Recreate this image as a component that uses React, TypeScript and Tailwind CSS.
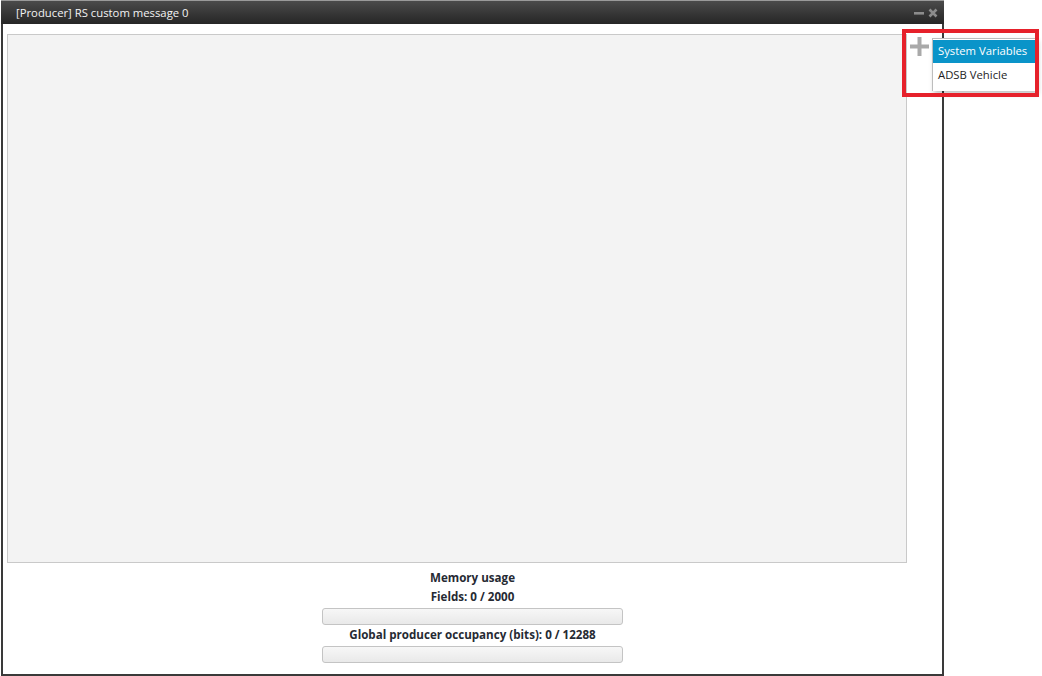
import React from "react";

const font = { fontFamily: '"Open Sans", "Noto Sans", sans-serif' };

function Bar() {
  return (
    <div className="h-[17px] w-[301px] rounded-[3px] border border-[#c4c4c4] bg-gradient-to-b from-[#f7f7f7] to-[#e9e9e9]" />
  );
}

export default function App() {
  return (
    <div className="relative h-[676px] w-[1042px] overflow-hidden bg-white" style={font}>
      {/* window frame */}
      <div className="ml-[1px] flex h-[676px] w-[943px] flex-col">
        <div className="flex h-[24px] items-center justify-between border-t border-[#9a9a9a] bg-gradient-to-b from-[#4b4b4b] to-[#262626] pl-[15px] pr-[6px]">
          <span className="text-[11.3px] leading-none text-[#f2f2f2]">[Producer] RS custom message 0</span>
          <div className="flex items-center gap-[4px]">
            <svg width="10" height="10" viewBox="0 0 10 10">
              <rect x="0" y="4" width="10" height="2.6" fill="#8c8c8c" />
            </svg>
            <svg width="10" height="10" viewBox="0 0 10 10">
              <path d="M1.5 1.5 L8.5 8.5 M8.5 1.5 L1.5 8.5" stroke="#8c8c8c" strokeWidth="2.6" />
            </svg>
          </div>
        </div>
        <div className="flex flex-1 flex-col border-x-2 border-b-2 border-[#3a3a3a] bg-white">
          <div className="flex pt-[10px]">
            <div className="ml-[4px] h-[529px] w-[900px] border border-[#c9c9c9] bg-[#f3f3f3]" />
            <div className="ml-[3px] pt-[3px]">
              <svg width="19" height="19" viewBox="0 0 19 19">
                <rect x="7.5" y="0" width="4" height="19" fill="#a9a9a9" />
                <rect x="0" y="7.5" width="19" height="4" fill="#a9a9a9" />
              </svg>
            </div>
          </div>
          <div className="mt-[5px] flex flex-col items-center text-[11.6px] font-bold leading-[19px] text-[#262a33]">
            <div>Memory usage</div>
            <div>Fields: 0 / 2000</div>
            <div className="mt-[2px]"><Bar /></div>
            <div>Global producer occupancy (bits): 0 / 12288</div>
            <div className="mt-[2px]"><Bar /></div>
          </div>
        </div>
      </div>

      {/* dropdown of field sources */}
      <div className="absolute left-[932px] top-[38px] w-[104px] border-l border-t border-[#bdbdbd] bg-white pb-[3px] pt-[1px] shadow-[2px_3px_5px_rgba(0,0,0,0.25)]">
        <div className="flex h-[23px] items-center bg-[#0a94c9] pl-[5px] text-[11.3px] text-white">System Variables</div>
        <div className="flex h-[25px] items-center pl-[5px] text-[11.3px] text-[#1e1e1e]">ADSB Vehicle</div>
      </div>

      {/* highlight frame */}
      <div className="absolute left-[902px] top-[29px] h-[68px] w-[137px] border-[4px] border-[#e6212b]" />
    </div>
  );
}
